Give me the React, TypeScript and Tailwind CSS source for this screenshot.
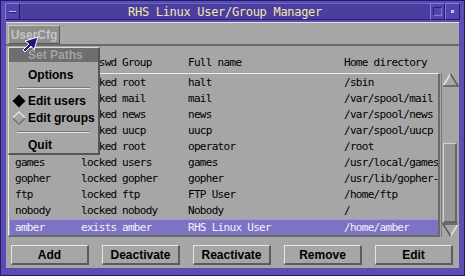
import React from 'react';

type User = { login: string; passwd: string; group: string; name: string; home: string };

const users: User[] = [
  { login: 'halt', passwd: 'locked', group: 'root', name: 'halt', home: '/sbin' },
  { login: 'mail', passwd: 'locked', group: 'mail', name: 'mail', home: '/var/spool/mail' },
  { login: 'news', passwd: 'locked', group: 'news', name: 'news', home: '/var/spool/news' },
  { login: 'uucp', passwd: 'locked', group: 'uucp', name: 'uucp', home: '/var/spool/uucp' },
  { login: 'operator', passwd: 'locked', group: 'root', name: 'operator', home: '/root' },
  { login: 'games', passwd: 'locked', group: 'users', name: 'games', home: '/usr/local/games' },
  { login: 'gopher', passwd: 'locked', group: 'gopher', name: 'gopher', home: '/usr/lib/gopher-data' },
  { login: 'ftp', passwd: 'locked', group: 'ftp', name: 'FTP User', home: '/home/ftp' },
  { login: 'nobody', passwd: 'locked', group: 'nobody', name: 'Nobody', home: '/' },
  { login: 'amber', passwd: 'exists', group: 'amber', name: 'RHS Linux User', home: '/home/amber' },
];

const mono = "font-['DejaVu_Sans_Mono',monospace] text-[11px] tracking-[-0.7px]";
const bold = "font-['Liberation_Sans',Arial,sans-serif] font-bold text-[12px]";

function Cols({ u, className }: { u: User; className?: string }) {
  return (
    <div className={`flex h-[16px] leading-[16px] whitespace-nowrap pl-[5px] ${className ?? ''}`}>
      <span className="w-[66px] shrink-0">{u.login}</span>
      <span className="w-[41px] shrink-0">{u.passwd}</span>
      <span className="w-[66px] shrink-0">{u.group}</span>
      <span className="w-[156px] shrink-0">{u.name}</span>
      <span className="flex-1 overflow-hidden">{u.home}</span>
    </div>
  );
}

function TitleButton({ children }: { children?: React.ReactNode }) {
  return (
    <div className="w-[15px] h-[17px] bg-[#5145ad] border-t border-l border-[#8478e0] border-r border-b border-r-[#251a6a] border-b-[#251a6a] flex items-center justify-center">
      {children}
    </div>
  );
}

function Arrow({ down }: { down?: boolean }) {
  return (
    <svg width="17" height="14" viewBox="0 0 17 14" className={down ? 'rotate-180' : ''}>
      <polygon points="8.5,1 16,13 1,13" fill="#a6a6a6" />
      <polyline points="1,13 8.5,1" stroke="#e4e4e4" strokeWidth="1.5" fill="none" />
      <polyline points="8.5,1 16,13 1,13" stroke="#5a5a5a" strokeWidth="1.5" fill="none" />
    </svg>
  );
}

export default function App() {
  return (
    <div className="w-[465px] h-[276px] bg-[#5a4eb4] border border-[#241a66] flex flex-col overflow-hidden">
      {/* title bar */}
      <div className="h-[21px] mx-[4px] flex items-center">
        <TitleButton>
          <div className="w-[7px] h-[2px] bg-[#c8c0f4] border-b border-[#2a2070]" />
        </TitleButton>
        <div className="flex-1 h-[17px] bg-[#4a3e9e] border-t border-[#6e62cc] border-b border-b-[#2a2070] flex items-center justify-center">
          <span className="font-['DejaVu_Sans_Mono',monospace] text-[12px] tracking-[-0.3px] text-[#f6e6ac] leading-none">
            RHS Linux User/Group Manager
          </span>
        </div>
        <TitleButton>
          <div className="w-[9px] h-[9px] border border-t-[#2a2070] border-l-[#2a2070] border-r-[#8478e0] border-b-[#8478e0]" />
        </TitleButton>
        <TitleButton>
          <div className="w-[3px] h-[3px] bg-[#c8c0f4]" />
        </TitleButton>
      </div>

      {/* client area */}
      <div className="relative mx-[5px] h-[246px] bg-[#a6a6a6] flex flex-col">
        {/* menubar */}
        <div className="h-[24px] border-t border-[#e2e2e2] border-b-2 border-b-[#6c6c6c] pl-[2px] pt-[2px]">
          <div className={`w-[52px] h-[19px] bg-[#8e8e8e] border border-t-[#c6c6c6] border-l-[#c6c6c6] border-r-[#5a5a5a] border-b-[#5a5a5a] flex items-center justify-center text-[#c4c4c4] ${bold}`}>
            UserCfg
          </div>
        </div>

        {/* header */}
        <div className={`h-[27px] pt-[9px] pl-[4px] text-black ${mono}`}>
          <Cols u={{ login: 'Login', passwd: 'Passwd', group: 'Group', name: 'Full name', home: 'Home directory' }} />
        </div>

        {/* list + scrollbar */}
        <div className="flex pl-[2px] h-[164px]">
          <div className="w-[432px] h-[164px] border-t border-l border-[#ececec] border-r-2 border-b-2 border-r-[#6a6a6a] border-b-[#6a6a6a] pt-[1px] pl-[1px] overflow-hidden">
            <div className={`text-black ${mono}`}>
              {users.map((u, i) => (
                <Cols
                  key={u.login}
                  u={u}
                  className={i === users.length - 1 ? 'bg-[#7c74c2] text-[#f2f2ff] border-t border-[#9e96dc] leading-[15px]' : ''}
                />
              ))}
            </div>
          </div>
          <div className="ml-[1px] w-[17px] h-[164px] flex flex-col border-l border-[#7a7a7a]">
            <Arrow />
            <div className="h-[56px]" />
            <div className="h-[80px] mx-[1px] bg-[#999999] border border-t-[#d4d4d4] border-l-[#d4d4d4] border-r-2 border-b-2 border-r-[#666666] border-b-[#666666]" />
            <Arrow down />
          </div>
        </div>

        {/* buttons */}
        <div className="flex gap-[13px] pl-[5px] pt-[8px]">
          {['Add', 'Deactivate', 'Reactivate', 'Remove', 'Edit'].map((b) => (
            <div
              key={b}
              className={`w-[78px] h-[20px] flex items-center justify-center bg-[#a6a6a6] border border-t-[#e6e6e6] border-l-[#e6e6e6] border-r-2 border-b-2 border-r-[#5c5c5c] border-b-[#5c5c5c] text-black ${bold}`}
            >
              {b}
            </div>
          ))}
        </div>

        {/* dropdown menu */}
        <div className="absolute left-[2px] top-[25px] w-[92px] h-[108px] bg-[#a6a6a6] border-t border-l border-[#dcdcdc] border-r-2 border-b-2 border-r-[#555555] border-b-[#555555] flex flex-col">
          <div className={`h-[14px] bg-[#6e6e6e] text-[#a2a2a2] pl-[19px] flex items-center ${bold}`}>Set Paths</div>
          <div className={`mt-[5px] h-[16px] pl-[19px] flex items-center text-black ${bold}`}>Options</div>
          <div className="mt-[4px] mx-[8px] h-[2px] border-t border-[#777777] border-b border-b-[#e6e6e6]" />
          <div className={`mt-[4px] h-[16px] pl-[3px] flex items-center text-black ${bold}`}>
            <svg width="14" height="14" viewBox="0 0 14 14" className="mr-[2px]">
              <polygon points="7,0.5 13.5,7 7,13.5 0.5,7" fill="#000" />
            </svg>
            Edit users
          </div>
          <div className={`mt-[1px] h-[16px] pl-[3px] flex items-center text-black ${bold}`}>
            <svg width="14" height="14" viewBox="0 0 14 14" className="mr-[2px]">
              <polyline points="0.8,7 7,0.8 13.2,7" stroke="#e8e8e8" strokeWidth="1.2" fill="none" />
              <polyline points="0.8,7 7,13.2 13.2,7" stroke="#6a6a6a" strokeWidth="1.2" fill="none" />
            </svg>
            Edit groups
          </div>
          <div className="mt-[5px] mx-[8px] h-[2px] border-t border-[#777777] border-b border-b-[#e6e6e6]" />
          <div className={`mt-[4px] h-[16px] pl-[19px] flex items-center text-black ${bold}`}>Quit</div>
        </div>

        {/* mouse pointer */}
        <svg width="17" height="17" viewBox="0 0 17 17" className="absolute left-[16px] top-[14px]">
          <polygon points="16,1 3,5 7,8 1,14 3,16 9,10 12,14" fill="#1c1c78" stroke="#ffffff" strokeWidth="1" />
        </svg>
      </div>
    </div>
  );
}
